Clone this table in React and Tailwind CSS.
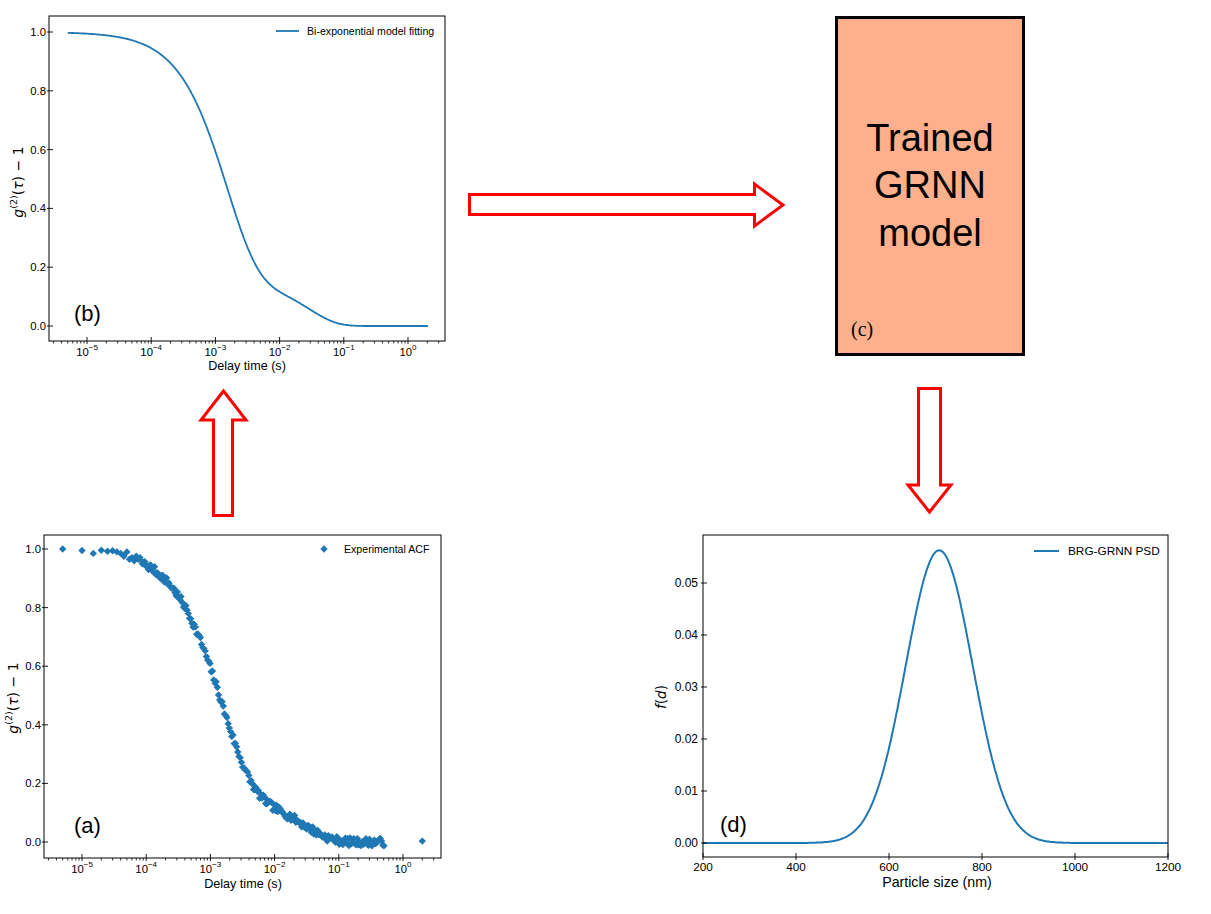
import React from 'react'

const BLUE = '#1f77b4'
const SANS = "'Liberation Sans', Arial, sans-serif"
const MATH = "'DejaVu Sans', sans-serif"
const SERIF = "'Liberation Serif', 'Times New Roman', serif"

// field autocorrelation squared, two decay times
const acf = (t) => (0.6 * Math.exp(-t / 0.00216) + 0.4 * Math.exp(-t / 0.057)) ** 2

const rand = (seed) => {
  let s = seed
  return () => {
    s = (s * 1664525 + 1013904223) % 4294967296
    return s / 4294967296
  }
}

const LogTicks = ({ x0, dec, bottom, xmin, xmax, labelY }) => {
  const majors = [-5, -4, -3, -2, -1, 0]
  const minors = []
  for (let e = -6; e <= 0; e++) {
    for (let k = 2; k <= 9; k++) {
      const x = x0 + (e + Math.log10(k) + 5) * dec
      if (x > xmin && x < xmax) minors.push(x)
    }
  }
  return (
    <g>
      {minors.map((x, i) => (
        <line key={'m' + i} x1={x} x2={x} y1={bottom} y2={bottom + 2.5} stroke="#000" strokeWidth="0.8" />
      ))}
      {majors.map((e) => {
        const x = x0 + (e + 5) * dec
        return (
          <g key={e}>
            <line x1={x} x2={x} y1={bottom - 4} y2={bottom + 3} stroke="#000" strokeWidth="0.9" />
            <text x={x} y={labelY} textAnchor="middle" fontFamily={SANS} fontSize="11.3" fill="#000">
              10
              <tspan dy="-6" fontSize="8">{e === 0 ? '0' : '\u2212' + Math.abs(e)}</tspan>
            </text>
          </g>
        )
      })}
    </g>
  )
}

const YTicks = ({ values, toY, left, labelX, fmt, size = 11.3 }) => (
  <g>
    {values.map((v) => {
      const y = toY(v)
      return (
        <g key={v}>
          <line x1={left - 2} x2={left + 4} y1={y} y2={y} stroke="#000" strokeWidth="0.9" />
          <text x={labelX} y={y + 4} textAnchor="end" fontFamily={SANS} fontSize={size} fill="#000">
            {fmt(v)}
          </text>
        </g>
      )
    })}
  </g>
)

const GLabel = ({ x, y }) => (
  <text transform={`translate(${x},${y}) rotate(-90)`} textAnchor="middle" fontFamily={MATH} fontSize="14" fill="#000">
    <tspan fontStyle="italic">g</tspan>
    <tspan dy="-6" fontSize="9.5">(2)</tspan>
    <tspan dy="6">(</tspan>
    <tspan fontStyle="italic">τ</tspan>
    <tspan>) − 1</tspan>
  </text>
)

const PanelB = () => {
  const x0 = 87
  const dec = 64.2
  let d = ''
  for (let L = -5.3; L <= 0.31; L += 0.01) {
    const x = x0 + (L + 5) * dec
    const y = 326 - acf(10 ** L) * 294
    d += (d ? 'L' : 'M') + x.toFixed(1) + ',' + y.toFixed(1)
  }
  return (
    <svg width="460" height="380" viewBox="0 0 460 380" className="block shrink-0">
      <path d={d} fill="none" stroke={BLUE} strokeWidth="1.8" />
      <rect x="49" y="16" width="396" height="325" fill="none" stroke="#000" strokeWidth="1" />
      <YTicks values={[0, 0.2, 0.4, 0.6, 0.8, 1]} toY={(v) => 326 - v * 294} left={49} labelX={46} fmt={(v) => v.toFixed(1)} />
      <LogTicks x0={x0} dec={dec} bottom={341} xmin={49} xmax={445} labelY={356} />
      <line x1="276" x2="299" y1="31" y2="31" stroke={BLUE} strokeWidth="1.8" />
      <text x="307" y="35" fontFamily={SANS} fontSize="10.6" fill="#000">Bi-exponential model fitting</text>
      <text x="74" y="321" fontFamily={SANS} fontSize="22" fill="#000">(b)</text>
      <text x="247" y="370" textAnchor="middle" fontFamily={SANS} fontSize="12.6" fill="#000">Delay time (s)</text>
      <GLabel x={23} y={182} />
    </svg>
  )
}

const PanelA = () => {
  const x0 = 82
  const dec = 64.2
  const r = rand(7)
  const early = [1.0, 0.995, 0.985, 0.996, 0.992, 0.994, 0.99, 0.985, 0.975, 0.99, 0.965, 0.97, 0.96, 0.975, 0.965, 0.97]
  const taus = []
  for (let n = 1; n <= 16; n++) taus.push(n * 5e-6)
  for (let t = 8e-5 * 2 ** (1 / 16); t <= 0.52; t *= 2 ** (1 / 16)) taus.push(t)
  taus.push(2.0)
  let d = ''
  taus.forEach((t, i) => {
    const L = Math.log10(t)
    const x = x0 + (L + 5) * dec
    const noise = (r() - 0.5) * 0.026
    let g = acf(t) + noise
    if (i < early.length) g = early[i]
    if (t > 1) g = 0.003
    const y = 842 - g * 293
    const h = 3.7
    d += `M${x.toFixed(1)},${(y - h).toFixed(1)}L${(x + h).toFixed(1)},${y.toFixed(1)}L${x.toFixed(1)},${(y + h).toFixed(1)}L${(x - h).toFixed(1)},${y.toFixed(1)}Z`
  })
  return (
    <svg width="460" height="384" viewBox="0 530 460 384" className="block shrink-0">
      <path d={d} fill={BLUE} />
      <rect x="44" y="535" width="397" height="323" fill="none" stroke="#000" strokeWidth="1" />
      <YTicks values={[0, 0.2, 0.4, 0.6, 0.8, 1]} toY={(v) => 842 - v * 293} left={44} labelX={41} fmt={(v) => v.toFixed(1)} />
      <LogTicks x0={x0} dec={dec} bottom={858} xmin={44} xmax={441} labelY={873} />
      <path d="M324,545.3L327.7,549L324,552.7L320.3,549Z" fill={BLUE} />
      <text x="344" y="553" fontFamily={SANS} fontSize="10.6" fill="#000">Experimental ACF</text>
      <text x="74" y="833" fontFamily={SANS} fontSize="22" fill="#000">(a)</text>
      <text x="243" y="888" textAnchor="middle" fontFamily={SANS} fontSize="12.6" fill="#000">Delay time (s)</text>
      <GLabel x={18} y={698} />
    </svg>
  )
}

const PanelD = () => {
  const toX = (nm) => 703 + (nm - 200) * 0.465
  const toY = (v) => 843 - v * 5200
  let d = ''
  for (let nm = 200; nm <= 1200; nm += 2) {
    const v = 0.0563 * Math.exp(-((nm - 708) ** 2) / (2 * 72 * 72))
    d += (d ? 'L' : 'M') + toX(nm).toFixed(1) + ',' + toY(v).toFixed(1)
  }
  return (
    <svg width="751" height="384" viewBox="460 530 751 384" className="block shrink-0">
      <path d={d} fill="none" stroke={BLUE} strokeWidth="2" />
      <rect x="703" y="535" width="465" height="322" fill="none" stroke="#000" strokeWidth="1" />
      <YTicks values={[0, 0.01, 0.02, 0.03, 0.04, 0.05]} toY={toY} left={703} labelX={698} fmt={(v) => v.toFixed(2)} size={12} />
      {[200, 400, 600, 800, 1000, 1200].map((v) => (
        <g key={v}>
          <line x1={toX(v)} x2={toX(v)} y1={853} y2={860} stroke="#000" strokeWidth="0.9" />
          <text x={toX(v)} y="871" textAnchor="middle" fontFamily={SANS} fontSize="11.8" fill="#000">{v}</text>
        </g>
      ))}
      <line x1="1034" x2="1059" y1="551" y2="551" stroke={BLUE} strokeWidth="2" />
      <text x="1068" y="555" fontFamily={SANS} fontSize="11.8" fill="#000">BRG-GRNN PSD</text>
      <text x="720" y="832" fontFamily={SANS} fontSize="22" fill="#000">(d)</text>
      <text x="937" y="887" textAnchor="middle" fontFamily={SANS} fontSize="14.2" fill="#000">Particle size (nm)</text>
      <text transform="translate(666,697) rotate(-90)" textAnchor="middle" fontFamily={MATH} fontSize="13.5" fill="#000">
        <tspan fontStyle="italic">f</tspan>(<tspan fontStyle="italic">d</tspan>)
      </text>
    </svg>
  )
}

const RED = '#ff0000'

export default function App() {
  return (
    <div className="w-[1211px] h-[914px] bg-white flex flex-col overflow-hidden">
      <div className="flex h-[380px] shrink-0">
        <PanelB />
        <svg width="375" height="380" viewBox="460 0 375 380" className="block shrink-0">
          <polygon
            points="469.5,194.5 754.5,194.5 754.5,184 783,205 754.5,226 754.5,214.5 469.5,214.5"
            fill="#fff"
            stroke={RED}
            strokeWidth="3"
          />
        </svg>
        <div className="relative mt-[16px] h-[340px] w-[190px] shrink-0 border-[3px] border-black bg-[#fdb08b] flex flex-col items-center justify-center">
          <div className="text-center text-[38px] leading-[47.5px] text-black" style={{ fontFamily: SANS }}>
            <div>Trained</div>
            <div>GRNN</div>
            <div>model</div>
          </div>
          <span className="absolute left-[13px] bottom-[14px] text-[20px] leading-none text-black" style={{ fontFamily: SERIF }}>
            (c)
          </span>
        </div>
      </div>
      <div className="flex h-[150px] shrink-0">
        <svg width="460" height="150" viewBox="0 380 460 150" className="block shrink-0">
          <polygon
            points="213.5,515.5 213.5,420 201,420 223.5,391 246,420 232.5,420 232.5,515.5"
            fill="#fff"
            stroke={RED}
            strokeWidth="3"
          />
        </svg>
        <svg width="751" height="150" viewBox="460 380 751 150" className="block shrink-0">
          <polygon
            points="918.5,388.5 940.5,388.5 940.5,485 951,485 929.5,512 908,485 918.5,485"
            fill="#fff"
            stroke={RED}
            strokeWidth="3"
          />
        </svg>
      </div>
      <div className="flex h-[384px] shrink-0">
        <PanelA />
        <PanelD />
      </div>
    </div>
  )
}
